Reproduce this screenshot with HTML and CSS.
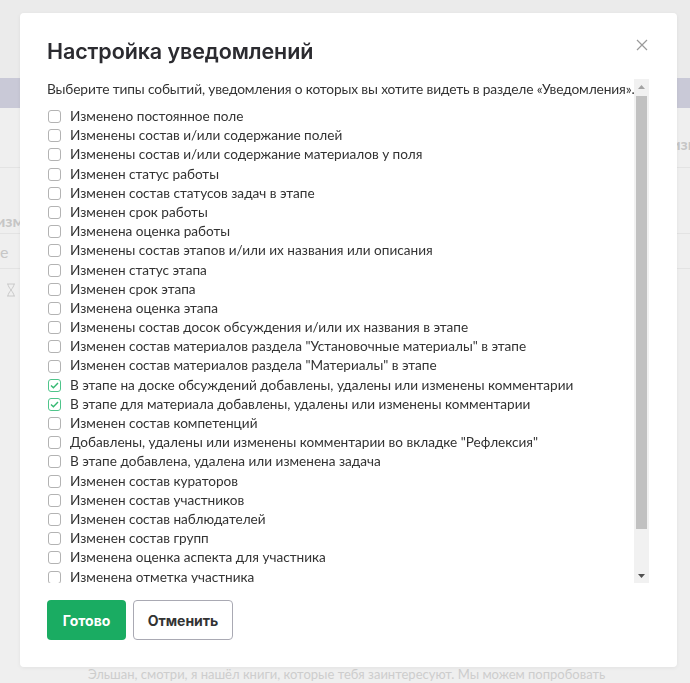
FILE: index.html
```html
<!DOCTYPE html>
<html lang="ru">
<head>
  <meta charset="UTF-8">
  <meta name="viewport" content="width=device-width, initial-scale=1.0">
  <title>Настройка уведомлений</title>
  <link rel="stylesheet" href="styles.css">
</head>
<body>
<!-- page behind the dialog -->
<div class="page">
  <div class="page-top"></div>
  <div class="page-band"></div>
  <div class="page-row row-head">
    <span class="ghost ghost-right">изи</span>
  </div>
  <div class="page-row row-title">
    <span class="ghost ghost-left">изм</span>
  </div>
  <div class="page-row row-cell">
    <span class="ghost ghost-small">е</span>
  </div>
  <div class="page-row row-icon">
    <svg class="ghost-icon" width="10" height="14" viewBox="0 0 10 14"><path d="M1 1H9M1 13H9M2 1C2 5 8 9 8 13M8 1C8 5 2 9 2 13" stroke="#cacaca" stroke-width="1" fill="none"/></svg>
  </div>
  <div class="page-fill"></div>
  <p class="page-message">Эльшан, смотри, я нашёл книги, которые тебя заинтересуют. Мы можем попробовать</p>
</div>

<!-- dialog -->
<div class="overlay">
  <div class="modal">
    <div class="modal-head">
      <h2>Настройка уведомлений</h2>
      <button class="close" aria-label="Закрыть">
        <svg width="12" height="12" viewBox="0 0 12 12"><path d="M1 1L11 11M11 1L1 11" stroke="#9a9a9a" stroke-width="1.2" fill="none"/></svg>
      </button>
    </div>
    <div class="modal-body">
      <div class="scroll-content">
        <p class="intro">Выберите типы событий, уведомления о которых вы хотите видеть в разделе «Уведомления».</p>
        <ul class="options">
          <li><span class="box"></span>Изменено постоянное поле</li>
          <li><span class="box"></span>Изменены состав и/или содержание полей</li>
          <li><span class="box"></span>Изменены состав и/или содержание материалов у поля</li>
          <li><span class="box"></span>Изменен статус работы</li>
          <li><span class="box"></span>Изменен состав статусов задач в этапе</li>
          <li><span class="box"></span>Изменен срок работы</li>
          <li><span class="box"></span>Изменена оценка работы</li>
          <li><span class="box"></span>Изменены состав этапов и/или их названия или описания</li>
          <li><span class="box"></span>Изменен статус этапа</li>
          <li><span class="box"></span>Изменен срок этапа</li>
          <li><span class="box"></span>Изменена оценка этапа</li>
          <li><span class="box"></span>Изменены состав досок обсуждения и/или их названия в этапе</li>
          <li><span class="box"></span>Изменен состав материалов раздела "Установочные материалы" в этапе</li>
          <li><span class="box"></span>Изменен состав материалов раздела "Материалы" в этапе</li>
          <li><span class="box checked"><svg width="9" height="7" viewBox="0 0 9 7"><path d="M1 3.5L3.4 5.8L8 1" stroke="#35b872" stroke-width="1.4" fill="none"/></svg></span>В этапе на доске обсуждений добавлены, удалены или изменены комментарии</li>
          <li><span class="box checked"><svg width="9" height="7" viewBox="0 0 9 7"><path d="M1 3.5L3.4 5.8L8 1" stroke="#35b872" stroke-width="1.4" fill="none"/></svg></span>В этапе для материала добавлены, удалены или изменены комментарии</li>
          <li><span class="box"></span>Изменен состав компетенций</li>
          <li><span class="box"></span>Добавлены, удалены или изменены комментарии во вкладке "Рефлексия"</li>
          <li><span class="box"></span>В этапе добавлена, удалена или изменена задача</li>
          <li><span class="box"></span>Изменен состав кураторов</li>
          <li><span class="box"></span>Изменен состав участников</li>
          <li><span class="box"></span>Изменен состав наблюдателей</li>
          <li><span class="box"></span>Изменен состав групп</li>
          <li><span class="box"></span>Изменена оценка аспекта для участника</li>
          <li><span class="box"></span>Изменена отметка участника</li>
          <li><span class="box"></span>Изменен состав ролей участников</li>
          <li><span class="box"></span>Изменены настройки доступа</li>
        </ul>
      </div>
      <div class="scrollbar">
        <div class="scroll-btn">
          <svg width="7" height="4" viewBox="0 0 7 4"><path d="M0 4L3.5 0L7 4Z" fill="#a3a3a3"/></svg>
        </div>
        <div class="scroll-track">
          <div class="scroll-thumb"></div>
        </div>
        <div class="scroll-btn">
          <svg width="7" height="4" viewBox="0 0 7 4"><path d="M0 0L3.5 4L7 0Z" fill="#505050"/></svg>
        </div>
      </div>
    </div>
    <div class="modal-foot">
      <button class="btn btn-primary">Готово</button>
      <button class="btn btn-outline">Отменить</button>
    </div>
  </div>
</div>
</body>
</html>
```

FILE: styles.css
```css
/* General */
body {
  margin: 0;
  padding: 0;
  background: #eeeeee;
  font-family: 'Lato', 'Noto Sans', sans-serif;
  color: #333;
  overflow: hidden;
}
/* Page behind the dialog */
.page {
  height: 683px;
  display: flex;
  flex-direction: column;
}
.page-top {
  height: 78px;
  background: #ebebeb;
}
.page-band {
  height: 30px;
  background: #c9c9d7;
}
.page-row {
  display: flex;
  box-sizing: border-box;
  background: #efefef;
  border-bottom: 1px solid #e3e3e3;
}
.row-head {
  height: 60px;
  justify-content: flex-end;
  align-items: center;
  padding-top: 12px;
}
.row-title {
  height: 66px;
  align-items: flex-end;
  padding-bottom: 3px;
}
.row-cell {
  height: 35px;
  align-items: center;
}
.row-icon {
  height: 42px;
  align-items: center;
  padding-left: 6px;
  border-bottom: none;
}
.ghost {
  color: #c6c6c6;
  font-size: 16px;
}
.ghost-right {
  margin-right: -7px;
  font-weight: 700;
}
.ghost-left {
  margin-left: -4px;
  font-weight: 700;
}
.ghost-small {
  margin-left: 0;
}
.page-fill {
  flex: 1;
  background: #efefef;
}
.page-message {
  margin: 0;
  height: 16px;
  padding-left: 88px;
  background: #efefef;
  font-size: 13px;
  line-height: 14px;
  color: #cdcdcd;
}
/* Dialog */
.overlay {
  position: fixed;
  top: 0;
  left: 0;
  right: 0;
  bottom: 0;
}
.modal {
  position: absolute;
  top: 13px;
  left: 20px;
  width: 657px;
  height: 654px;
  box-sizing: border-box;
  padding: 24px 28px 27px 27px;
  background: white;
  border-radius: 4px;
  box-shadow: 0 1px 4px rgba(0, 0, 0, 0.06);
  display: flex;
  flex-direction: column;
}
.modal-head {
  display: flex;
  justify-content: space-between;
  align-items: flex-start;
}
.modal-head h2 {
  margin: 0;
  font-family: 'Inter', 'Noto Sans', sans-serif;
  font-size: 21.5px;
  font-weight: 600;
  line-height: 28px;
  color: #2b2b30;
  letter-spacing: -0.1px;
}
.close {
  border: none;
  background: none;
  padding: 0;
  margin: 2px 0 0 0;
  width: 14px;
  height: 14px;
  cursor: pointer;
}
.modal-body {
  margin-top: 14px;
  height: 504px;
  display: flex;
}
.scroll-content {
  flex: 1;
  min-width: 0;
  overflow: hidden;
}
/* Scrollbar */
.scrollbar {
  flex: none;
  width: 15px;
  display: flex;
  flex-direction: column;
  background: #f1f1f1;
}
.scroll-btn {
  height: 15px;
  display: flex;
  align-items: center;
  justify-content: center;
}
.scroll-track {
  flex: 1;
  padding: 2px 2px 0 2px;
}
.scroll-thumb {
  height: 433px;
  background: #c1c1c1;
}
.intro {
  margin: 0;
  font-size: 13.75px;
  line-height: 19px;
  letter-spacing: -0.15px;
  white-space: nowrap;
}
.options {
  list-style: none;
  margin: 9px 0 0 0;
  padding: 0 0 0 1px;
}
.options li {
  display: flex;
  align-items: center;
  font-size: 13.6px;
  line-height: 19.2px;
  height: 19.2px;
  white-space: nowrap;
}
.box {
  flex: none;
  width: 11px;
  height: 11px;
  margin-right: 9px;
  border: 1px solid #b3b3b3;
  border-radius: 3px;
  background: white;
  display: flex;
  align-items: center;
  justify-content: center;
}
.box.checked {
  border-color: #4fc58b;
}
.modal-foot {
  margin-top: auto;
  display: flex;
  gap: 7px;
}
.btn {
  height: 40px;
  border-radius: 4px;
  font-family: 'Inter', 'Noto Sans', sans-serif;
  font-size: 14px;
  font-weight: 700;
  cursor: pointer;
}
.btn-primary {
  width: 79px;
  background: #1aac62;
  border: none;
  color: white;
}
.btn-outline {
  width: 100px;
  background: white;
  border: 1px solid #a9a9b3;
  color: #333;
}
```
